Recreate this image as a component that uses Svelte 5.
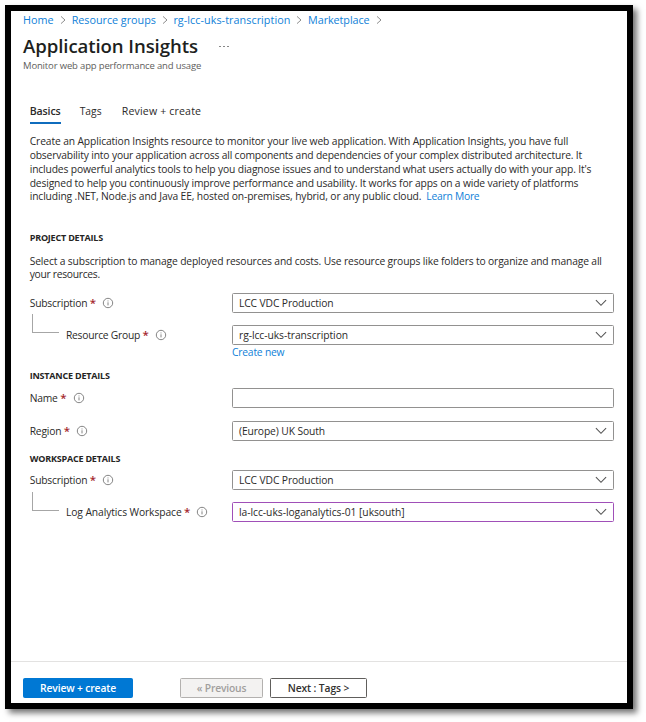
<script>
  const crumbs = [
    { text: 'Home', width: 31, track: -0.02 },
    { text: 'Resource groups', width: 84, track: -0.03 },
    { text: 'rg-lcc-uks-transcription', width: 117, track: 0.05 },
    { text: 'Marketplace', width: 62, track: -0.07 }
  ];
  const intro = [
    { text: 'Create an Application Insights resource to monitor your live web application. With Application Insights, you have full', track: -0.126 },
    { text: 'observability into your application across all components and dependencies of your complex distributed architecture. It', track: -0.164 },
    { text: "includes powerful analytics tools to help you diagnose issues and to understand what users actually do with your app. It's", track: -0.152 },
    { text: 'designed to help you continuously improve performance and usability. It works for apps on a wide variety of platforms', track: -0.154 },
    { text: 'including .NET, Node.js and Java EE, hosted on-premises, hybrid, or any public cloud.', track: -0.135, link: 'Learn More' }
  ];
  const project = [
    { label: 'Subscription', track: -0.2, value: 'LCC VDC Production', vtrack: -0.12 },
    { label: 'Resource Group', track: -0.26, value: 'rg-lcc-uks-transcription', vtrack: -0.06, nested: true }
  ];
  const instance = [
    { label: 'Name', track: -0.2, input: true },
    { label: 'Region', track: -0.2, value: '(Europe) UK South', vtrack: -0.11 }
  ];
  const workspace = [
    { label: 'Subscription', track: -0.2, value: 'LCC VDC Production', vtrack: -0.12 },
    { label: 'Log Analytics Workspace', track: -0.1, value: 'la-lcc-uks-loganalytics-01 [uksouth]', vtrack: -0.04, nested: true, edited: true }
  ];
</script>

{#snippet field(f)}
  <div class="field" class:nested={f.nested}>
    <div class="label">
      {#if f.nested}<span class="elbow"></span>{/if}
      <span style:letter-spacing="{f.track}px">{f.label}</span>
      <span class="star">*</span>
      <svg class="info" viewBox="0 0 12 12" width="12" height="12">
        <circle cx="6" cy="6" r="4.7" fill="none" stroke="#777" stroke-width="0.9" />
        <path d="M6 5.3V8.4M6 3.5V4.4" stroke="#777" stroke-width="0.9" />
      </svg>
    </div>
    <div class="box" class:edited={f.edited}>
      {#if !f.input}
        <span style:letter-spacing="{f.vtrack}px">{f.value}</span>
        <svg viewBox="0 0 12 8" width="12" height="8">
          <path d="M0.9 1.2L6 6.3L11.1 1.2" fill="none" stroke="#555" stroke-width="1.1" />
        </svg>
      {/if}
    </div>
  </div>
{/snippet}

<div class="page">
  <div class="window">
    <nav class="crumbs">
      {#each crumbs as c}
        <a style:width="{c.width}px" style:letter-spacing="{c.track}px">{c.text}</a>
        <svg viewBox="0 0 6 8" width="6" height="8">
          <path d="M1 0.4L5 4L1 7.6" fill="none" stroke="#808080" stroke-width="0.9" />
        </svg>
      {/each}
    </nav>
    <header>
      <h1>Application Insights</h1>
      <span class="dots"><i></i><i></i><i></i></span>
    </header>
    <p class="subtitle">Monitor web app performance and usage</p>

    <main>
      <div class="tabs">
        <span class="tab active">Basics</span>
        <span class="tab tags">Tags</span>
        <span class="tab review">Review + create</span>
      </div>
      <div class="intro">
        {#each intro as l}
          <div><span style:letter-spacing="{l.track}px">{l.text}</span>{#if l.link}<a class="learn">{l.link}</a>{/if}</div>
        {/each}
      </div>

      <h2>PROJECT DETAILS</h2>
      <div class="hint">
        <div class="l1">Select a subscription to manage deployed resources and costs. Use resource groups like folders to organize and manage all</div>
        <div class="l2">your resources.</div>
      </div>
      <section class="pair">
        {#each project as f}{@render field(f)}{/each}
      </section>
      <a class="create">Create new</a>

      <h2 class="inst">INSTANCE DETAILS</h2>
      <section class="wide">
        {#each instance as f}{@render field(f)}{/each}
      </section>

      <h2 class="work">WORKSPACE DETAILS</h2>
      <section class="pair">
        {#each workspace as f}{@render field(f)}{/each}
      </section>
    </main>

    <footer>
      <button class="primary">Review + create</button>
      <button class="prev">« Previous</button>
      <button class="next">Next : Tags &gt;</button>
    </footer>
  </div>
</div>

<style>
  :global(body) {
    margin: 0;
    background: #fff;
  }
  .page {
    box-sizing: border-box;
    width: 646px;
    height: 722px;
    padding: 5px 0 0 5px;
    overflow: hidden;
  }
  .window {
    box-sizing: border-box;
    display: flex;
    flex-direction: column;
    width: 628px;
    height: 704px;
    border: 6px solid #000;
    background: #fff;
    box-shadow: 4px 4px 6px rgba(0, 0, 0, 0.55);
    font: 10.3px 'Open Sans', 'Noto Sans', sans-serif;
    color: #2b2a29;
    white-space: nowrap;
  }
  a {
    color: #0f7fd8;
  }
  .crumbs {
    display: flex;
    align-items: center;
    height: 17px;
    padding-left: 12px;
    font-size: 10.8px;
  }
  .crumbs a {
    line-height: 17px;
  }
  .crumbs svg {
    margin: 1px 5.7px 0 6px;
  }
  header {
    display: flex;
    align-items: center;
    height: 26px;
    margin-top: 5px;
    padding-left: 12px;
  }
  h1 {
    width: 175px;
    margin: 0;
    font-size: 18.6px;
    line-height: 26px;
    font-weight: 600;
    letter-spacing: -0.085px;
    color: #201f1e;
  }
  .dots {
    display: flex;
    gap: 2.5px;
    margin: 1px 0 0 21px;
  }
  .dots i {
    width: 1.5px;
    height: 1.5px;
    background: #888;
  }
  .subtitle {
    margin: 0 0 0 12px;
    font-size: 9.5px;
    line-height: 14px;
    letter-spacing: -0.157px;
    color: #605e5c;
  }
  main {
    flex: 1;
    padding: 28px 13px 0 18.7px;
  }
  .tabs {
    display: flex;
    height: 23px;
  }
  .tab {
    line-height: 20px;
  }
  .active {
    box-sizing: border-box;
    width: 31px;
    height: 23px;
    font-size: 10.6px;
    font-weight: 600;
    letter-spacing: -0.12px;
    border-bottom: 2px solid #0f6cbd;
  }
  .tags {
    width: 23px;
    margin-left: 19px;
  }
  .review {
    margin-left: 19px;
    font-size: 10.6px;
    letter-spacing: 0.158px;
  }
  .intro {
    margin-top: 11.4px;
    line-height: 13.7px;
  }
  .learn {
    margin-left: 5px;
    letter-spacing: -0.25px;
  }
  h2 {
    height: 13px;
    margin: 26.6px 0 0;
    font-size: 9px;
    line-height: 13px;
    font-weight: 700;
    letter-spacing: -0.2px;
    color: #252423;
  }
  .hint {
    margin-top: 11px;
    line-height: 13.9px;
  }
  .l1 {
    letter-spacing: -0.15px;
  }
  .l2 {
    letter-spacing: -0.29px;
  }
  section {
    display: flex;
    flex-direction: column;
  }
  .hint + .pair {
    margin-top: 10.6px;
  }
  .pair {
    gap: 11.6px;
  }
  .wide {
    gap: 13px;
    margin-top: 6px;
  }
  .field {
    display: flex;
    align-items: center;
    height: 20px;
  }
  .label {
    display: flex;
    align-items: center;
    width: 202.3px;
    height: 20px;
    line-height: 20px;
  }
  .star {
    margin-left: 2.5px;
    font-size: 11.5px;
    font-weight: 600;
    color: #a4262c;
  }
  .info {
    margin-left: 6px;
  }
  .elbow {
    box-sizing: border-box;
    width: 27px;
    height: 19px;
    margin: -22px 7px 0 2.3px;
    border-left: 1px solid #a6a6a6;
    border-bottom: 1px solid #a6a6a6;
  }
  .box {
    box-sizing: border-box;
    display: flex;
    align-items: center;
    justify-content: space-between;
    width: 382px;
    height: 20px;
    padding: 0 6px;
    border: 1px solid #929190;
    border-radius: 1.5px;
    line-height: 18px;
  }
  .edited {
    border-color: #a04fb8;
  }
  .create {
    display: block;
    height: 14px;
    margin: 0 0 0 202.3px;
    line-height: 14px;
    letter-spacing: -0.2px;
  }
  .inst {
    margin-top: 10.4px;
  }
  .work {
    margin: 11px 0 5.6px;
  }
  footer {
    box-sizing: border-box;
    display: flex;
    height: 42px;
    padding: 16px 0 0 12px;
    border-top: 1px solid #e3e2e1;
  }
  button {
    box-sizing: border-box;
    height: 20px;
    padding: 0;
    border: 1px solid #b3b1af;
    border-radius: 1.5px;
    font: 600 10.3px/16px 'Open Sans', 'Noto Sans', sans-serif;
    letter-spacing: -0.13px;
  }
  .primary {
    width: 110px;
    border-color: #0078d4;
    background: #0078d4;
    color: #fff;
  }
  .prev {
    width: 83px;
    margin-left: 47px;
    background: #f3f2f1;
    color: #a19f9d;
    letter-spacing: -0.18px;
  }
  .next {
    width: 97px;
    margin-left: 7px;
    border-color: #605e5c;
    background: #fff;
    color: #323130;
  }
</style>
